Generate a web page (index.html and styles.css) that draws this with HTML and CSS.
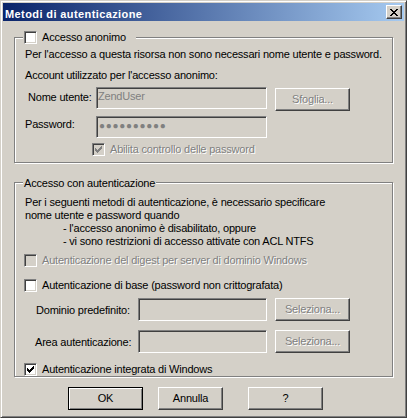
FILE: index.html
```html
<!DOCTYPE html>
<html lang="it">
<head>
<meta charset="utf-8">
<title>Metodi di autenticazione</title>
<link rel="stylesheet" href="styles.css">
</head>
<body>
<div class="window">
  <div class="titlebar">
    <span class="title">Metodi di autenticazione</span>
    <span class="close" aria-label="Chiudi">
      <svg width="8" height="7" viewBox="0 0 8 7" shape-rendering="crispEdges"><path fill="#000" d="M0 0h2v1H0zM6 0h2v1H6zM1 1h2v1H1zM5 1h2v1H5zM2 2h4v1H2zM3 3h2v1H3zM2 4h4v1H2zM1 5h2v1H1zM5 5h2v1H5zM0 6h2v1H0zM6 6h2v1H6z"/></svg>
    </span>
  </div>
  <div class="client">
    <fieldset class="group group-anon">
      <legend class="legend-check"><span class="cb"></span><span>Accesso anonimo</span></legend>
      <p class="intro">Per l'accesso a questa risorsa non sono necessari nome utente e password.</p>
      <p class="account">Account utilizzato per l'accesso anonimo:</p>
      <div class="fields fields-anon">
        <span class="label label-user">Nome utente:</span>
        <span class="edit edit-anon">ZendUser</span>
        <span class="btn btn-sub dis">Sfoglia...</span>
        <span class="label label-pass">Password:</span>
        <span class="edit edit-anon"><span class="dots">●●●●●●●●●●</span></span>
      </div>
      <div class="check-row row-abilita">
        <span class="cb cb-off"><svg width="7" height="7" viewBox="0 0 7 7" shape-rendering="crispEdges"><path fill="#808080" d="M6 0h1v1H6zM5 1h2v1H5zM0 2h1v1H0zM4 2h3v1H4zM0 3h2v1H0zM3 3h3v1H3zM0 4h5v1H0zM1 5h3v1H1zM2 6h1v1H2z"/></svg></span>
        <span class="dis">Abilita controllo delle password</span>
      </div>
    </fieldset>

    <fieldset class="group group-auth">
      <legend class="legend-text">Accesso con autenticazione</legend>
      <p class="auth-intro">Per i seguenti metodi di autenticazione, è necessario specificare<br>nome utente e password quando</p>
      <ul class="conds">
        <li>- l'accesso anonimo è disabilitato, oppure</li>
        <li>- vi sono restrizioni di accesso attivate con ACL NTFS</li>
      </ul>
      <div class="check-row row-digest">
        <span class="cb cb-off"></span>
        <span class="dis">Autenticazione del digest per server di dominio Windows</span>
      </div>
      <div class="check-row row-basic">
        <span class="cb"></span>
        <span>Autenticazione di base (password non crittografata)</span>
      </div>
      <div class="fields fields-auth">
        <span class="label label-dom">Dominio predefinito:</span>
        <span class="edit edit-auth"></span>
        <span class="btn dis">Seleziona...</span>
        <span class="label label-area">Area autenticazione:</span>
        <span class="edit edit-auth"></span>
        <span class="btn dis">Seleziona...</span>
      </div>
      <div class="check-row row-integrated">
        <span class="cb"><svg width="7" height="7" viewBox="0 0 7 7" shape-rendering="crispEdges"><path fill="#000" d="M6 0h1v1H6zM5 1h2v1H5zM0 2h1v1H0zM4 2h3v1H4zM0 3h2v1H0zM3 3h3v1H3zM0 4h5v1H0zM1 5h3v1H1zM2 6h1v1H2z"/></svg></span>
        <span>Autenticazione integrata di Windows</span>
      </div>
    </fieldset>

    <div class="buttons">
      <span class="btn btn-default">OK</span>
      <span class="btn btn-cancel">Annulla</span>
      <span class="btn">?</span>
    </div>
  </div>
</div>
</body>
</html>
```

FILE: styles.css
```css
html, body {
  margin: 0;
  padding: 0;
}

body {
  background: #d4d0c8;
  font-family: "Liberation Sans", Arial, sans-serif;
  font-size: 11px;
  line-height: 13px;
  letter-spacing: -0.2px;
  color: #000;
}

.window {
  box-sizing: border-box;
  width: 407px;
  height: 418px;
  padding: 2px;
  background: #d4d0c8;
  border: 1px solid;
  border-color: #d4d0c8 #404040 #404040 #d4d0c8;
  box-shadow: inset 1px 1px #fff, inset -1px -1px #808080;
  display: flex;
  flex-direction: column;
}

/* title bar */
.titlebar {
  height: 18px;
  flex: none;
  display: flex;
  align-items: flex-start;
  background: linear-gradient(to right, #0a246a, #a6caf0);
  color: #fff;
}

.title {
  flex: 1;
  padding: 5px 0 0 2px;
  font-weight: bold;
  letter-spacing: 0.4px;
  white-space: nowrap;
}

.close {
  box-sizing: border-box;
  width: 16px;
  height: 14px;
  margin: 2px 2px 0 0;
  padding: 3px 0 0 3px;
  background: #d4d0c8;
  border: 1px solid;
  border-color: #fff #404040 #404040 #fff;
  box-shadow: inset -1px -1px #808080;
}

.close svg,
.cb svg {
  display: block;
}

/* client area */
.client {
  padding-left: 11px;
}

p {
  margin: 0;
}

.group {
  box-sizing: border-box;
  width: 379px;
  min-width: 0;
  margin: 0;
  padding: 0;
  border: 1px solid #808080;
  box-shadow: inset 1px 1px #fff, 1px 1px #fff;
}

.group legend {
  margin-left: 8px;
  background: #d4d0c8;
}

.group-anon {
  margin-top: 10px;
  padding-bottom: 6px;
}

.group-auth {
  margin-top: 13px;
}

.legend-check {
  display: flex;
  align-items: flex-start;
  gap: 5px;
  padding: 0 10px 0 1px;
}

.legend-text {
  padding: 1px 1px 0;
  line-height: 12px;
}

/* checkbox */
.cb {
  box-sizing: border-box;
  flex: none;
  width: 13px;
  height: 13px;
  padding: 2px 0 0 2px;
  background: #fff;
  border: 1px solid;
  border-color: #808080 #fff #fff #808080;
  box-shadow: inset 1px 1px #404040, inset -1px -1px #d4d0c8;
}

.cb-off {
  background: #d4d0c8;
}

.check-row {
  display: flex;
  align-items: flex-start;
  gap: 5px;
  height: 13px;
  padding-left: 9px;
  white-space: nowrap;
}

.dis {
  color: #808080;
  text-shadow: 1px 1px #fff;
}

/* texts group 1 */
.intro {
  margin-top: 4px;
  padding-left: 10px;
  white-space: nowrap;
}

.account {
  margin-top: 8px;
  padding-left: 10px;
}

/* field grids */
.fields {
  display: grid;
  column-gap: 8px;
  align-items: start;
}

.fields-anon {
  grid-template-columns: 63px 171px 75px;
  row-gap: 5px;
  margin-top: 5px;
  padding-left: 10px;
}

.fields-auth {
  grid-template-columns: 95px 129px 75px;
  row-gap: 9px;
  margin-top: 6px;
  padding-left: 20px;
}

.label {
  white-space: nowrap;
}

.label-user {
  margin: 4px 0 0 3px;
}

.label-pass {
  margin-top: 2px;
}

.label-dom {
  margin: 6px 0 0 1px;
}

.label-area {
  margin-top: 6px;
}

.edit {
  box-sizing: border-box;
  display: block;
  padding: 2px 0 0 1px;
  color: #808080;
  background: #d4d0c8;
  border: 1px solid;
  border-color: #808080 #fff #fff #808080;
  box-shadow: inset 1px 1px #404040, inset -1px -1px #d4d0c8;
  white-space: nowrap;
  overflow: hidden;
}

.edit-anon {
  height: 22px;
}

.edit-auth {
  height: 23px;
}

.dots {
  display: block;
  padding: 1px 0 0 1px;
  font-size: 10px;
  letter-spacing: 0.7px;
  line-height: 12px;
}

/* buttons */
.btn {
  box-sizing: border-box;
  display: block;
  width: 75px;
  height: 23px;
  background: #d4d0c8;
  border: 1px solid;
  border-color: #fff #404040 #404040 #fff;
  box-shadow: inset -1px -1px #808080;
  text-align: center;
  line-height: 21px;
  white-space: nowrap;
}

.btn-sub {
  margin-top: 1px;
}

.row-abilita {
  margin-top: 5px;
  padding-left: 77px;
}

/* group 2 */
.auth-intro {
  margin-top: 7px;
  padding-left: 10px;
  white-space: nowrap;
}

.conds {
  margin: 0;
  padding: 0 0 0 48px;
  list-style: none;
  white-space: nowrap;
}

.row-digest {
  margin-top: 6px;
}

.row-basic {
  margin-top: 12px;
}

.row-integrated {
  margin-top: 10px;
}

/* bottom buttons */
.buttons {
  display: flex;
  margin: 10px 0 0 54px;
}

.btn-default {
  border-color: #000;
  box-shadow: inset 1px 1px #fff, inset -1px -1px #808080;
  margin-right: 15px;
}

.btn-cancel {
  width: 65px;
  margin-right: 25px;
}
```
